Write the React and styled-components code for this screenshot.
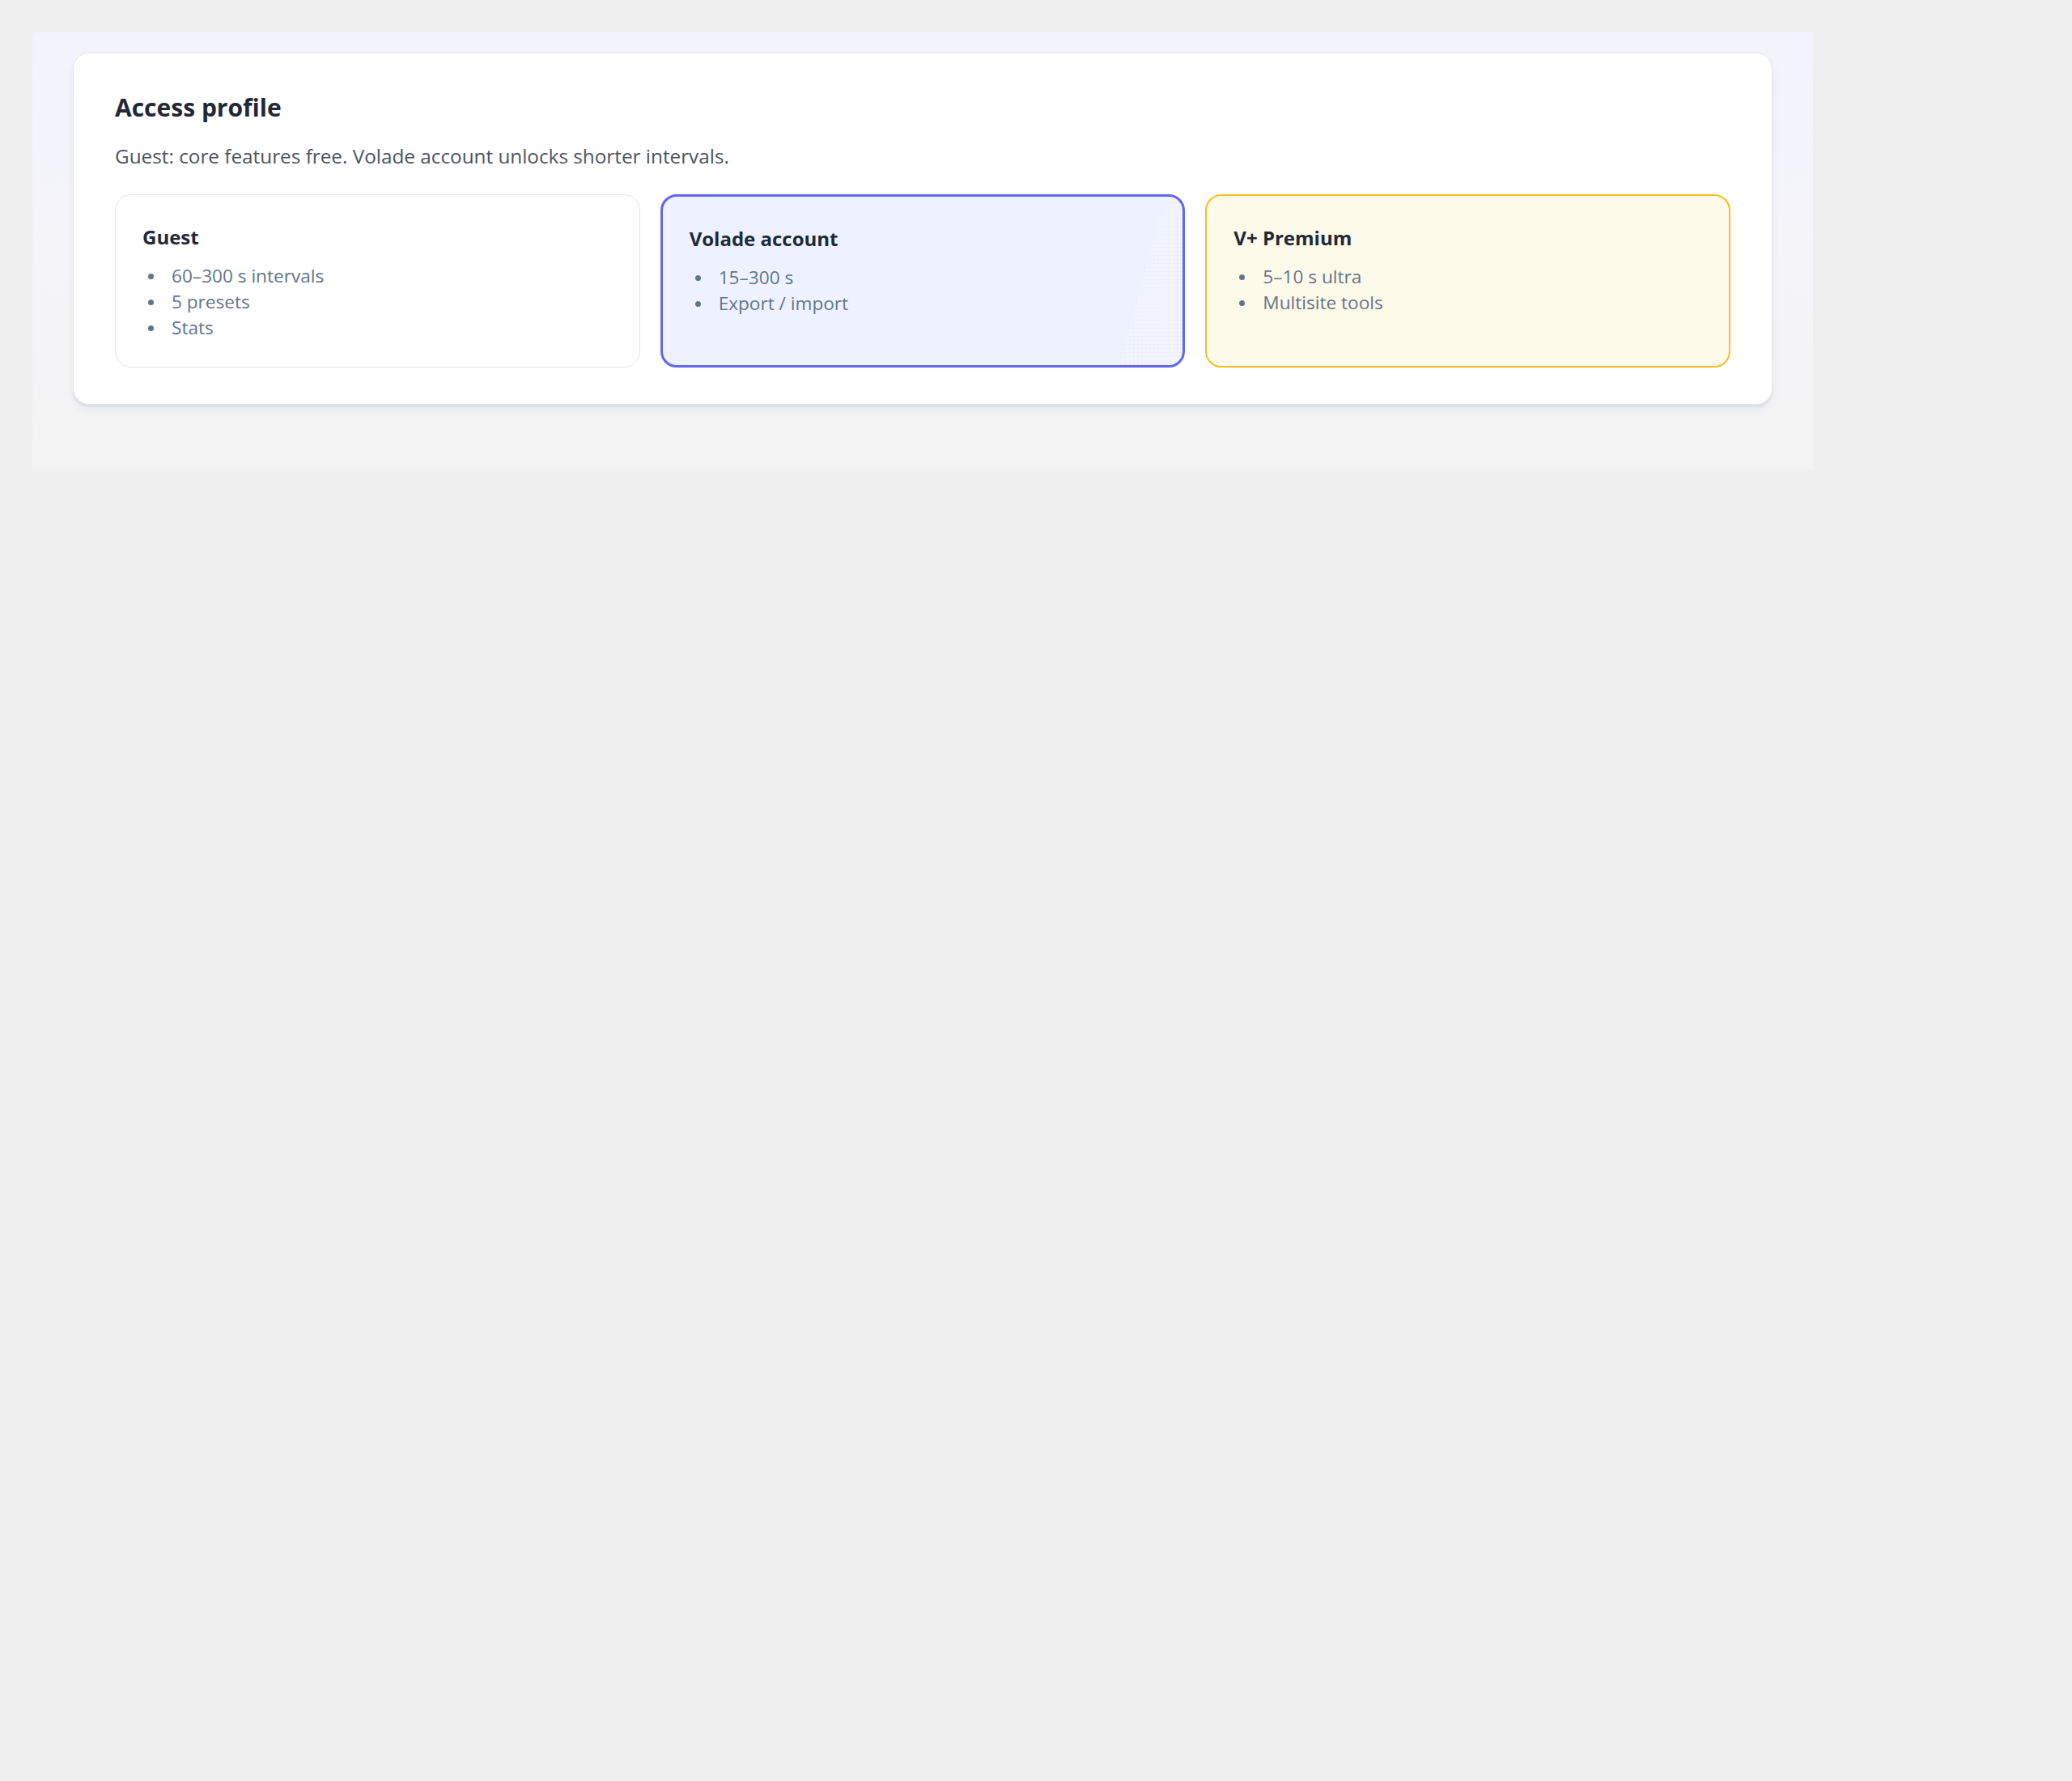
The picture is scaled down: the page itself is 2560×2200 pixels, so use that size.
import styled, { createGlobalStyle } from 'styled-components';

const GlobalStyle = createGlobalStyle`
  html, body {
    margin: 0;
    padding: 0;
    background: #efefef;
  }
  body {
    padding: 40px;
    font-family: "Open Sans", "Noto Sans", sans-serif;
    -webkit-font-smoothing: antialiased;
  }
`;

const Backdrop = styled.div`
  width: 2200px;
  box-sizing: border-box;
  padding: 25px 50px 80px;
  background: linear-gradient(180deg, #f2f3fd 0%, #f5f5f9 55%, #f3f3f3 100%);
`;

const ProfileCard = styled.section`
  background: #fff;
  border: 1px solid #e3e6ea;
  border-radius: 20px;
  padding: 47px 51px 45px;
  box-shadow: 0 3px 0 rgba(220, 225, 232, 0.9), 0 6px 12px rgba(15, 23, 42, 0.05);
`;

const Heading = styled.h2`
  margin: 0;
  font-size: 30px;
  line-height: 39px;
  font-weight: 700;
  color: #1f2937;
`;

const Lead = styled.p`
  margin: 24px 0 0;
  font-size: 24.3px;
  line-height: 33px;
  color: #4b5563;
`;

const TierGrid = styled.div`
  display: grid;
  grid-template-columns: repeat(3, 1fr);
  gap: 25px;
  margin-top: 31px;
`;

const tones = {
  guest: { border: '1px solid #e3e6ea', bg: '#fff' },
  account: { border: '3px solid #6366f1', bg: '#eef2ff' },
  premium: { border: '2px solid #fbbf24', bg: '#fefae9' },
};

const Tier = styled.div`
  position: relative;
  overflow: hidden;
  border: ${props => tones[props.tone].border};
  background: ${props => tones[props.tone].bg};
  border-radius: 20px;
  padding: 36px 33px 32px;

  &::after {
    content: '';
    display: ${props => (props.tone === 'account' ? 'block' : 'none')};
    position: absolute;
    top: 0;
    right: 0;
    bottom: 0;
    width: 78px;
    clip-path: polygon(72% 0, 100% 0, 100% 100%, 0 100%);
    background-color: rgba(255, 255, 255, 0.18);
    background-image: radial-gradient(rgba(99, 102, 241, 0.12) 0.8px, transparent 1px);
    background-size: 5px 5px;
  }
`;

const TierName = styled.h3`
  margin: 0;
  font-size: 24px;
  line-height: 31px;
  font-weight: 700;
  color: #1f2937;
`;

const Perks = styled.ul`
  margin: 17px 0 0;
  padding: 0 0 0 36px;
  list-style: none;
`;

const Perk = styled.li`
  position: relative;
  font-size: 22.6px;
  line-height: 32px;
  color: #64748b;

  &::before {
    content: '';
    position: absolute;
    left: -29px;
    top: 13px;
    width: 7px;
    height: 7px;
    border-radius: 50%;
    background: #64748b;
  }
`;

const tiers = [
  { tone: 'guest', name: 'Guest', perks: ['60–300 s intervals', '5 presets', 'Stats'] },
  { tone: 'account', name: 'Volade account', perks: ['15–300 s', 'Export / import'] },
  { tone: 'premium', name: 'V+ Premium', perks: ['5–10 s ultra', 'Multisite tools'] },
];

const App = () => {
  return (
    <>
      <GlobalStyle />
      <Backdrop>
        <ProfileCard>
          <Heading>Access profile</Heading>
          <Lead>Guest: core features free. Volade account unlocks shorter intervals.</Lead>
          <TierGrid>
            {tiers.map(tier => (
              <Tier key={tier.tone} tone={tier.tone}>
                <TierName>{tier.name}</TierName>
                <Perks>
                  {tier.perks.map(perk => (
                    <Perk key={perk}>{perk}</Perk>
                  ))}
                </Perks>
              </Tier>
            ))}
          </TierGrid>
        </ProfileCard>
      </Backdrop>
    </>
  );
};

export default App;
